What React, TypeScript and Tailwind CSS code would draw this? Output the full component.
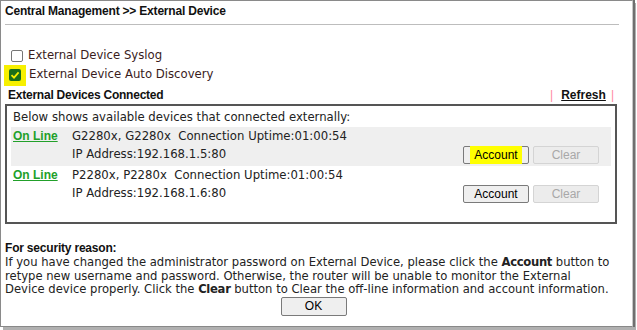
import React from "react";

const body = { fontFamily: '"DejaVu Sans", Verdana, sans-serif' };
const arial = { fontFamily: '"Liberation Sans", Arial, sans-serif' };

function Btn({ label, disabled, hl }: { label: string; disabled?: boolean; hl?: boolean }) {
  return (
    <button
      style={arial}
      className={
        disabled
          ? "w-[66px] h-[18px] rounded-[2px] border border-[#d4d4d4] bg-[#ececec] text-[12px] leading-none text-[#a8a8a8]"
          : "w-[66px] h-[18px] rounded-[2px] border border-[#7a7a7a] bg-[#efefef] text-[12px] leading-none text-black"
      }
    >
      {hl ? <span className="bg-[#ffff00] px-[4px] py-[2px]">{label}</span> : label}
    </button>
  );
}

function Device({ name, ip, shaded, hl }: { name: string; ip: string; shaded?: boolean; hl?: boolean }) {
  return (
    <div className={"flex h-[39px] " + (shaded ? "bg-[#efefef]" : "")}>
      <div className="w-[61px] pl-[2px] pt-[2px]">
        <span style={arial} className="block h-[15px] leading-[15px] text-[12px] font-bold text-[#22a02a] underline">On Line</span>
      </div>
      <div className="flex-1 flex flex-col">
        <div style={body} className="text-[11.7px] h-[19px] leading-[15px] pt-[2px] text-[#222] whitespace-pre">{name}</div>
        <div className="flex items-center justify-between pr-[12px]">
          <span style={body} className="text-[11.7px] text-[#222]">{ip}</span>
          <div className="flex gap-[4px]">
            <Btn label="Account" hl={hl} />
            <Btn label="Clear" disabled />
          </div>
        </div>
      </div>
    </div>
  );
}

export default function App() {
  return (
    <div className="w-[637px] h-[330px] bg-white">
      <div className="w-[633px] h-[327px] bg-white border-l border-t border-[#8a8a8a] border-r border-r-[#c8c8c8] shadow-[2px_0_0_#6f6f6f,3px_3px_0_#b0b0b0] border-b border-b-[#888]">
        <div className="pl-[4px] pr-[14px] pt-[2px]">
          <div style={arial} className="text-[12px] tracking-[-0.2px] font-bold text-[#111] h-[21px] leading-[16px]">
            Central Management &gt;&gt; External Device
          </div>
          <div className="h-[2px] border-t border-[#bdbdbd] mr-[-1px]" />
        </div>
        <div className="h-[20px]" />
        <div className="pl-[10px] flex items-center h-[19px] gap-[5px]">
          <span className="w-[12px] h-[12px] rounded-[2px] border border-[#767676] bg-white" />
          <span style={body} className="text-[11.7px] text-[#3a1c1c]">External Device Syslog</span>
        </div>
        <div className="flex items-center h-[20px]">
          <div className="ml-[3px] w-[22px] h-[21px] bg-[#f7f000] flex items-center justify-center">
            <span className="w-[12px] h-[12px] rounded-[2px] bg-[#1a6e1a] flex items-center justify-center">
              <svg width="10" height="10" viewBox="0 0 10 10"><path d="M1.5 5.2 L4 7.6 L8.6 2.4" stroke="#f7f000" strokeWidth="1.8" fill="none" /></svg>
            </span>
          </div>
          <span style={body} className="ml-[3px] text-[11.7px] text-[#3a1c1c]">External Device Auto Discovery</span>
        </div>
        <div className="flex items-center justify-between h-[19px] pl-[7px] pr-[18px]">
          <span style={arial} className="text-[12px] tracking-[-0.23px] font-bold text-[#111]">External Devices Connected</span>
          <div className="flex items-center" style={arial}>
            <span className="text-[#ff8aa0] text-[12px]">|</span>
            <span className="ml-[8px] text-[12px] font-bold underline text-[#111]">Refresh</span>
            <span className="ml-[5px] text-[#ff8aa0] text-[12px]">|</span>
          </div>
        </div>
        <div className="ml-[4px] w-[612px] h-[120px] border-2 border-[#555] px-[4px] pt-[3px]">
          <div style={body} className="text-[11.7px] h-[18px] text-[#222] pl-[2px]">
            Below shows available devices that connected externally:
          </div>
          <Device name="G2280x, G2280x  Connection Uptime:01:00:54" ip="IP Address:192.168.1.5:80" shaded hl />
          <Device name="P2280x, P2280x  Connection Uptime:01:00:54" ip="IP Address:192.168.1.6:80" />
        </div>
        <div className="pl-[4px] pr-[4px] pt-[17px]">
          <div style={arial} className="text-[12px] tracking-[-0.2px] font-bold text-[#111] h-[15px] leading-[14px]">For security reason:</div>
          <p style={body} className="text-[11.6px] leading-[13.5px] text-[#222] whitespace-nowrap">
            If you have changed the administrator password on External Device, please click the <b className="tracking-[-0.3px]">Account</b> button to
            <br />
            retype new username and password. Otherwise, the router will be unable to monitor the External
            <br />
            Device device properly. Click the <b className="tracking-[-0.3px]">Clear</b> button to Clear the off-line information and account information.
          </p>
          <div className="flex justify-center pr-[6px]">
            <button style={arial} className="w-[66px] h-[19px] rounded-[2px] border border-[#7a7a7a] bg-[#efefef] text-[12px] leading-none">OK</button>
          </div>
        </div>
      </div>
    </div>
  );
}
